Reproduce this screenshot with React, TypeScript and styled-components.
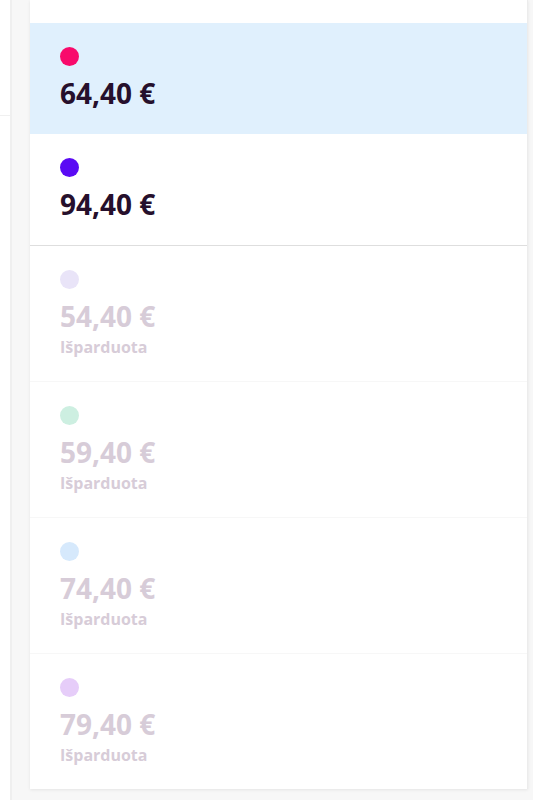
import { createGlobalStyle, styled } from "styled-components";

const GlobalStyle = createGlobalStyle`
  html, body {
    margin: 0;
    padding: 0;
    background: #f7f7f7;
    font-family: "Open Sans", "Noto Sans", sans-serif;
  }
`;

const Page = styled.div`
  display: flex;
  height: 800px;
  overflow: hidden;
`;

const SidePanel = styled.div`
  width: 10px;
  flex-shrink: 0;
  background: #ffffff;
  border-right: 2px solid #efefef;
`;

const SideBlock = styled.div`
  height: 115px;
  border-bottom: 1px solid #f0f0f0;
`;

const Card = styled.div`
  margin-left: 18px;
  width: 497px;
  align-self: flex-start;
  background: #ffffff;
  box-shadow: 0 1px 3px rgba(0, 0, 0, 0.08);
  border-right: 1px solid #ececec;
`;

const RowTail = styled.div`
  height: 23px;
`;

const Row = styled.div<{ $selected?: boolean; $soldOut?: boolean }>`
  display: flex;
  flex-direction: column;
  align-items: flex-start;
  padding: 24px 30px ${(p) => (p.$soldOut ? "24px" : p.$selected ? "22px" : "23px")};
  background: ${(p) => (p.$selected ? "#e0f0fd" : "#ffffff")};
  border-bottom: 1px solid ${(p) => (p.$soldOut ? "#f7f7f7" : p.$selected ? "#e0f0fd" : "#dedede")};

  &:last-child {
    border-bottom: none;
  }
`;

const Dot = styled.span<{ $color: string }>`
  width: 19px;
  height: 19px;
  border-radius: 50%;
  background: ${(p) => p.$color};
  margin-bottom: 9px;
`;

const Price = styled.div<{ $soldOut?: boolean }>`
  font-size: 28px;
  line-height: 36px;
  font-weight: 700;
  color: ${(p) => (p.$soldOut ? "#d7ccd8" : "#26102c")};
`;

const Status = styled.div`
  margin-top: 3px;
  font-size: 16px;
  line-height: 20px;
  font-weight: 700;
  color: #d7ccd8;
`;

type Option = {
  price: string;
  color: string;
  selected?: boolean;
  soldOut?: boolean;
};

const options: Option[] = [
  { price: "64,40 €", color: "#f80a6b", selected: true },
  { price: "94,40 €", color: "#5a0af4" },
  { price: "54,40 €", color: "#e9e4f8", soldOut: true },
  { price: "59,40 €", color: "#cdefe1", soldOut: true },
  { price: "74,40 €", color: "#d6e9fc", soldOut: true },
  { price: "79,40 €", color: "#e6cdf9", soldOut: true },
];

export default function App() {
  return (
    <>
      <GlobalStyle />
      <Page>
        <SidePanel>
          <SideBlock />
        </SidePanel>
        <Card>
          <RowTail />
          {options.map((o) => (
            <Row key={o.price} $selected={o.selected} $soldOut={o.soldOut}>
              <Dot $color={o.color} />
              <Price $soldOut={o.soldOut}>{o.price}</Price>
              {o.soldOut ? <Status>Išparduota</Status> : null}
            </Row>
          ))}
        </Card>
      </Page>
    </>
  );
}
